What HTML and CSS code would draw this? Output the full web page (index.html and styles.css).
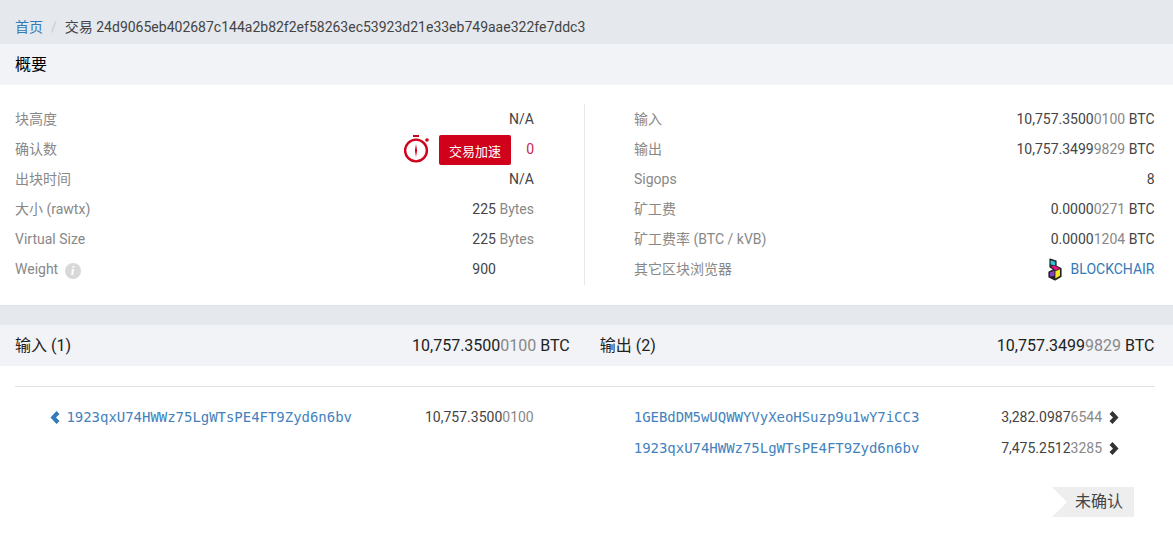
FILE: index.html
```html
<!DOCTYPE html>
<html lang="en">
<head>
    <meta charset="UTF-8">
    <title>交易</title>
    <link rel="stylesheet" href="styles.css">
</head>
<body>
    <div class="breadcrumb">
        <a href="#">首页</a>
        <span class="crumb-sep">/</span>
        <span>交易 24d9065eb402687c144a2b82f2ef58263ec53923d21e33eb749aae322fe7ddc3</span>
    </div>

    <div class="panel-heading">概要</div>
    <div class="summary">
        <div class="summary-col summary-left">
            <div class="row"><span class="label">块高度</span><span class="value">N/A</span></div>
            <div class="row">
                <span class="label">确认数</span>
                <span class="value accel">
                    <svg class="timer" width="26" height="28" viewBox="0 0 26 28">
                        <rect x="9" y="0" width="6" height="2" fill="#d0021b"/>
                        <circle cx="12" cy="15.5" r="10.9" fill="none" stroke="#d0021b" stroke-width="2.4"/>
                        <circle cx="23" cy="5" r="1.8" fill="#d0021b"/>
                        <path d="M12 9 L13.1 15.5 L12 22 L10.9 15.5 Z" fill="#d0021b"/>
                    </svg>
                    <button class="accel-btn">交易加速</button>
                    <span class="zero">0</span>
                </span>
            </div>
            <div class="row"><span class="label">出块时间</span><span class="value">N/A</span></div>
            <div class="row"><span class="label">大小 (rawtx)</span><span class="value">225 <span class="dim">Bytes</span></span></div>
            <div class="row"><span class="label">Virtual Size</span><span class="value">225 <span class="dim">Bytes</span></span></div>
            <div class="row">
                <span class="label">Weight <i class="info">i</i></span>
                <span class="value">900 <span class="ghost">Bytes</span></span>
            </div>
        </div>
        <div class="summary-col summary-right">
            <div class="row"><span class="label">输入</span><span class="value">10,757.3500<span class="dim">0100</span> BTC</span></div>
            <div class="row"><span class="label">输出</span><span class="value">10,757.3499<span class="dim">9829</span> BTC</span></div>
            <div class="row"><span class="label">Sigops</span><span class="value">8</span></div>
            <div class="row"><span class="label">矿工费</span><span class="value">0.0000<span class="dim">0271</span> BTC</span></div>
            <div class="row"><span class="label">矿工费率 (BTC / kVB)</span><span class="value">0.0000<span class="dim">1204</span> BTC</span></div>
            <div class="row">
                <span class="label">其它区块浏览器</span>
                <a class="value explorer" href="#">
                    <svg width="16" height="23" viewBox="0 0 16 23">
                        <path d="M3 1 L9 3 V8 L14 10.5 V18.5 L8 22 L2 19 V14 L7 11.5 L3 9 Z" fill="#222" stroke="#222" stroke-width="1.2" stroke-linejoin="round"/>
                        <path d="M3.6 2.2 L8.2 3.8 V7.4 L3.6 6.6 Z" fill="#29c5d8"/>
                        <path d="M3.8 8 L8 7.8 L12.8 10.6 L8.4 12.4 Z" fill="#e8127f"/>
                        <path d="M3 14.6 L7.4 12.6 V18 L3 18.4 Z" fill="#8a3fc4"/>
                        <path d="M8.4 13.2 L13 11.2 V17.8 L8.4 20.4 Z" fill="#f5e620"/>
                    </svg>
                    BLOCKCHAIR
                </a>
            </div>
        </div>
    </div>

    <div class="band"></div>

    <div class="io-heading">
        <div class="io-title"><span>输入 (1)</span><span>10,757.3500<span class="dim">0100</span> BTC</span></div>
        <div class="io-title"><span>输出 (2)</span><span>10,757.3499<span class="dim">9829</span> BTC</span></div>
    </div>

    <div class="io-body">
        <div class="io-col io-in">
            <div class="io-row">
                <a class="addr" href="#">
                    <svg class="chev" width="10" height="13" viewBox="0 0 10 13"><path d="M6.5 0 L9.5 3 L6 6.5 L9.5 10 L6.5 13 L0.5 6.5 Z" fill="#337ab7"/></svg>
                    1923qxU74HWWz75LgWTsPE4FT9Zyd6n6bv
                </a>
                <span class="amount">10,757.3500<span class="dim">0100</span></span>
            </div>
        </div>
        <div class="io-col io-out">
            <div class="io-row">
                <a class="addr" href="#">1GEBdDM5wUQWWYVyXeoHSuzp9u1wY7iCC3</a>
                <span class="amount">3,282.0987<span class="dim">6544</span>
                    <svg class="chev" width="10" height="13" viewBox="0 0 10 13"><path d="M3.5 0 L0.5 3 L4 6.5 L0.5 10 L3.5 13 L9.5 6.5 Z" fill="#333"/></svg>
                </span>
            </div>
            <div class="io-row">
                <a class="addr" href="#">1923qxU74HWWz75LgWTsPE4FT9Zyd6n6bv</a>
                <span class="amount">7,475.2512<span class="dim">3285</span>
                    <svg class="chev" width="10" height="13" viewBox="0 0 10 13"><path d="M3.5 0 L0.5 3 L4 6.5 L0.5 10 L3.5 13 L9.5 6.5 Z" fill="#333"/></svg>
                </span>
            </div>
        </div>
    </div>

    <div class="status-wrap"><span class="status">未确认</span></div>
</body>
</html>
```

FILE: styles.css
```css
body {
    margin: 0;
    background: #fff;
    color: #444;
    font-family: Roboto, "Noto Sans CJK SC", sans-serif;
    font-size: 14px;
    line-height: 20px;
}
a {
    color: #337ab7;
    text-decoration: none;
}
.breadcrumb {
    height: 44px;
    box-sizing: border-box;
    padding: 17px 15px 0;
    background: #e5e8ed;
    display: flex;
}
.crumb-sep {
    color: #ccc;
    margin: 0 8px;
}
.panel-heading {
    height: 41px;
    line-height: 41px;
    padding: 0 15px;
    background: #f1f3f7;
    color: #000;
    font-size: 16px;
}
.summary {
    height: 221px;
    box-sizing: border-box;
    padding: 19px 18.5px 0 15px;
    display: flex;
    border-bottom: 1px solid #dfe2e7;
}
.summary-col {
    height: 181px;
}
.summary-left {
    width: 570px;
    box-sizing: border-box;
    padding-right: 50px;
    border-right: 1px solid #e5e8ed;
}
.summary-right {
    flex: 1;
    padding-left: 49px;
}
.row {
    height: 30px;
    display: flex;
    justify-content: space-between;
    align-items: center;
}
.label {
    color: #888;
}
.value {
    white-space: nowrap;
}
.accel,
.explorer {
    display: flex;
    align-items: center;
}
.dim {
    color: #888;
}
.ghost {
    visibility: hidden;
}
.info {
    display: inline-block;
    width: 16px;
    height: 16px;
    margin-left: 3px;
    border-radius: 50%;
    background: #d8d8d8;
    color: #fff;
    font-family: "Liberation Serif", serif;
    font-size: 13px;
    font-weight: bold;
    line-height: 16px;
    text-align: center;
    vertical-align: -1px;
}
.timer {
    margin-right: 9px;
}
.accel-btn {
    width: 72px;
    height: 30px;
    margin: 2px 15px 0 0;
    padding: 0;
    border: none;
    border-radius: 2px;
    background: #d0021b;
    color: #fff;
    font-family: inherit;
    font-size: 13px;
}
.zero {
    color: #c7254e;
}
.explorer {
    color: #337ab7;
}
.explorer svg {
    margin-right: 8px;
}
.band {
    height: 19px;
    background: #e5e8ed;
}
.io-heading {
    height: 41px;
    padding: 0 18.5px 0 15px;
    background: #f1f3f7;
    display: flex;
    gap: 30px;
    color: #222;
    font-size: 16px;
    line-height: 41px;
}
.io-title {
    flex: 1;
    display: flex;
    justify-content: space-between;
}
.io-body {
    margin: 20px 18.5px 0 15px;
    padding-top: 14px;
    border-top: 1px solid #e0e0e0;
    display: flex;
    gap: 30px;
}
.io-col {
    flex: 1;
}
.io-row {
    height: 31px;
    display: flex;
    justify-content: space-between;
    align-items: center;
}
.io-in .io-row {
    padding: 0 36px 0 35px;
}
.io-out .io-row {
    padding: 0 36px 0 34px;
}
.addr {
    color: #4482bd;
    font-family: "DejaVu Sans Mono", monospace;
    font-size: 14px;
    letter-spacing: -0.03px;
}
.chev {
    vertical-align: -2px;
    margin-left: 3px;
}
.io-in .chev {
    margin: 0 -2px 0 0;
}
.status-wrap {
    margin: 24px 39px 0 0;
    display: flex;
    justify-content: flex-end;
}
.status {
    width: 82px;
    height: 30px;
    box-sizing: border-box;
    padding-left: 23px;
    background: #eee;
    font-size: 16px;
    line-height: 30px;
    clip-path: polygon(0 0, 100% 0, 100% 100%, 0 100%, 15px 50%);
}
```
